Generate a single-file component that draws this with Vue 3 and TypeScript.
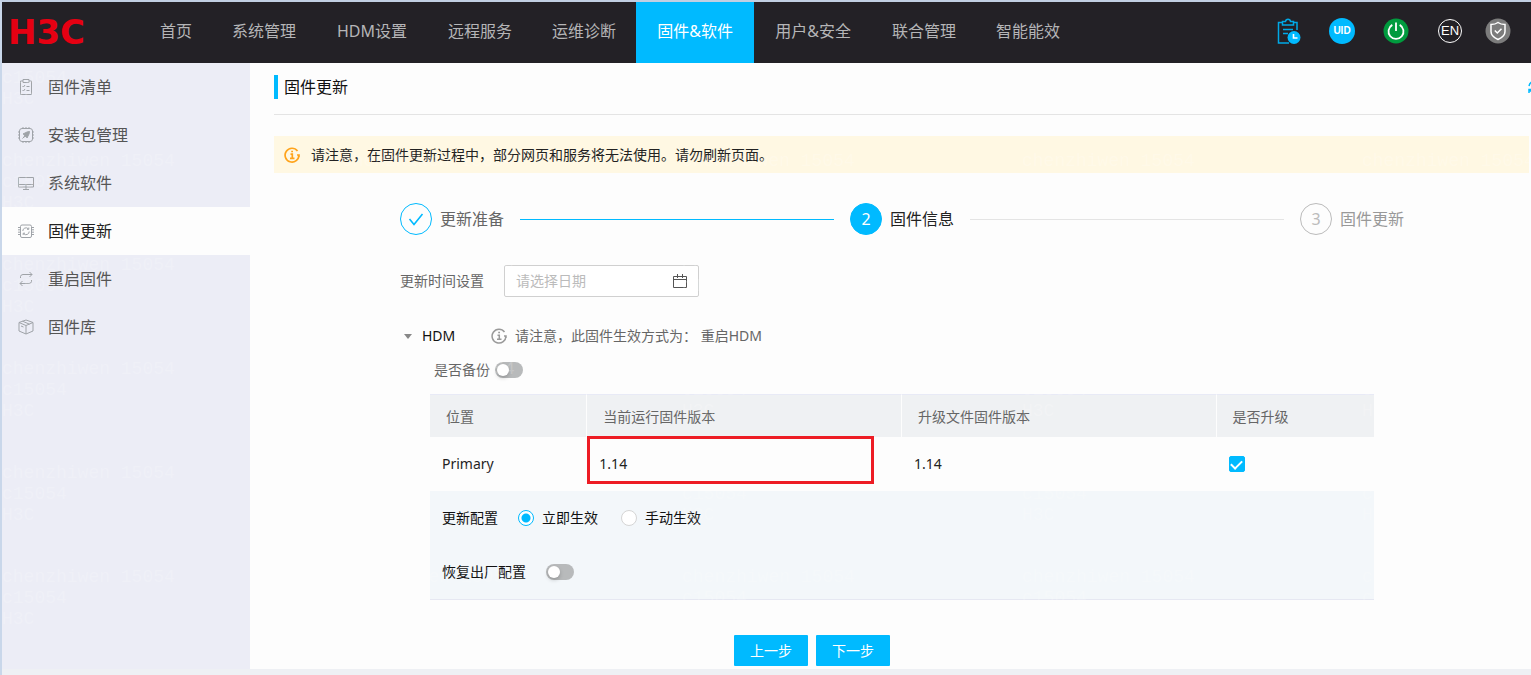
<script setup lang="ts">
import { ref } from 'vue'

interface NavItem { label: string; size?: string; active?: boolean }
interface SideItem { label: string; icon: string; active?: boolean }

const nav: NavItem[] = [
  { label: '首页' },
  { label: '系统管理' },
  { label: 'HDM设置', size: 'mid' },
  { label: '远程服务' },
  { label: '运维诊断' },
  { label: '固件&软件', size: 'wide', active: true },
  { label: '用户&安全', size: 'wide' },
  { label: '联合管理' },
  { label: '智能能效' },
]

const side: SideItem[] = [
  { label: '固件清单', icon: 'list' },
  { label: '安装包管理', icon: 'package' },
  { label: '系统软件', icon: 'monitor' },
  { label: '固件更新', icon: 'chip', active: true },
  { label: '重启固件', icon: 'loop' },
  { label: '固件库', icon: 'box' },
]

const date = ref('')
const backup = ref(false)
const upgrade = ref(true)
const effect = ref('now')
const restore = ref(false)
</script>

<template>
  <div class="page">
    <header class="top">
      <a href="#" class="logo">H3C</a>
      <nav class="nav">
        <a v-for="n in nav" :key="n.label" href="#" :class="['nav-item', n.size, { active: n.active }]">{{ n.label }}</a>
      </nav>
      <div class="tools">
        <button type="button" class="tool" aria-label="任务">
          <svg width="26" height="28" viewBox="0 0 26 28" fill="none" stroke="#00a9e6" stroke-width="1.5">
            <path d="M7 5.500H3.500V26H14M18 5.500h4V13M7.500 4.500h3c.5-3 4.500-3 5 0h3V8h-11z" />
            <path d="M8 12.500h10M8 16.500h5" />
            <circle cx="19" cy="20.500" r="6.500" fill="#00baff" stroke="none" />
            <path d="M18.500 17v4h4" stroke="#fff" stroke-width="1.600" />
          </svg>
        </button>
        <button type="button" class="tool uid">UID</button>
        <button type="button" class="tool" aria-label="电源">
          <svg width="26" height="26" viewBox="0 0 26 26" fill="none">
            <circle cx="13" cy="13" r="12.500" fill="#009b3e" />
            <path d="M9.300 6.900a7.500 7.500 0 1 0 7.400 0M13 4.500v8.500" stroke="#fff" stroke-width="1.800" />
          </svg>
        </button>
        <button type="button" class="tool en"><span>EN</span></button>
        <button type="button" class="tool" aria-label="安全">
          <svg width="26" height="26" viewBox="0 0 26 26" fill="none">
            <circle cx="13" cy="13" r="12.500" fill="#7c7c7c" />
            <path d="M13 4.500c2 1.500 4.300 2 7 2v7c0 3.500-3 6.300-7 8-4-1.700-7-4.500-7-8v-7c2.700 0 5-.5 7-2z" stroke="#fff" stroke-width="1.500" />
            <path d="M9.800 12.500l2.500 2.500 4.200-4.300" stroke="#fff" stroke-width="1.500" />
          </svg>
        </button>
      </div>
    </header>

    <div class="body">
      <aside class="side">
        <a v-for="s in side" :key="s.label" href="#" :class="['side-item', { active: s.active }]">
          <svg width="16" height="16" viewBox="0 0 16 16" fill="none" stroke="#9fa3a8" stroke-width="1">
            <template v-if="s.icon === 'list'">
              <path d="M5 2H2.500v13.500h11V2H11M5 .5h6v3H5z" />
              <path d="M4.500 7l1 1 1.500-2M4.500 11l1 1 1.500-2M8.500 7.500h3M8.500 11.500h3" />
            </template>
            <template v-else-if="s.icon === 'package'">
              <rect x="1.500" y="1.500" width="13" height="13" rx="2.500" />
              <path d="M5 0v1.500M8 0v1.500M11 0v1.500M5 14.500V16M8 14.500V16M11 14.500V16M0 5h1.500M0 8h1.500M0 11h1.500M14.500 5H16M14.500 8H16M14.500 11H16" />
              <path d="M11.500 4.500L9 5 5 7l2 .8L6 10l2.200-1L9 11l2-4z" fill="#9fa3a8" />
              <path d="M4.500 11.500l2-2" />
            </template>
            <template v-else-if="s.icon === 'monitor'">
              <path d="M.5 2.500h15v9.500H.5zM.5 9.500h15M8 9.500v4.500M5 14.500h6" />
            </template>
            <template v-else-if="s.icon === 'chip'">
              <rect x="2.500" y="2" width="11" height="12.500" rx="1.500" />
              <path d="M0 4.500h3M0 6.800h3M0 9.200h3M0 11.500h3M13 4.500h3M13 6.800h3M13 9.200h3M13 11.500h3" />
              <path d="M4.800 8a3.200 3.200 0 0 1 5.500-2.200M11.200 8.500a3.200 3.200 0 0 1-5.500 2.200M10.800 4.500v1.800H9M5.200 12v-1.800H7" />
            </template>
            <template v-else-if="s.icon === 'loop'">
              <path d="M2.500 7V5.500A2.500 2.500 0 0 1 5 3.500h9M11.500 1L14 3.500 11.500 6M13.500 9v1.500a2.500 2.500 0 0 1-2.500 2H2M4.500 10L2 12.500 4.500 15" />
            </template>
            <template v-else>
              <path d="M8 1l7 2.500v8.500l-7 3-7-3V3.500zM1 3.500l7 3 7-3M8 6.500V15M4.500 2.200l7 3M3 7l2.500 1" />
            </template>
          </svg>
          <span>{{ s.label }}</span>
        </a>
      </aside>

      <main class="main">
        <div class="title-row">
          <h1>固件更新</h1>
          <button type="button" class="refresh" aria-label="刷新">
            <svg width="14" height="14" viewBox="0 0 14 14" fill="none" stroke="#00baff" stroke-width="1.500">
              <path d="M1 6a6 6 0 0 1 11-2M13 8a6 6 0 0 1-11 2M1 13V9.500h3" />
            </svg>
          </button>
        </div>

        <div class="alert">
          <svg width="16" height="16" viewBox="0 0 16 16" fill="none" stroke="#ffa31a" stroke-width="1.700">
            <path d="M13.500 4A6.900 6.900 0 1 0 14.900 8M15 10V8h-2" />
            <path d="M6.500 7.200h1.800v4M6 11.300h4.500M7.200 4.500h1.800" />
          </svg>
          <span>请注意，在固件更新过程中，部分网页和服务将无法使用。请勿刷新页面。</span>
        </div>

        <div class="content">
          <ol class="steps">
            <li class="step done">
              <span class="dot">
                <svg width="16" height="16" viewBox="0 0 16 16" fill="none" stroke="#00baff" stroke-width="1.600"><path d="M1.500 8l4.500 5.500L14.500 3" /></svg>
              </span>
              <span class="step-title">更新准备</span>
            </li>
            <li class="step current"><span class="dot">2</span><span class="step-title">固件信息</span></li>
            <li class="step wait"><span class="dot">3</span><span class="step-title">固件更新</span></li>
          </ol>

          <div class="date-row">
            <label for="date">更新时间设置</label>
            <div class="date-box">
              <input id="date" v-model="date" type="text" placeholder="请选择日期" />
              <svg width="14" height="14" viewBox="0 0 14 14" fill="none" stroke="#555" stroke-width="1">
                <path d="M.5 2.500h13v11H.5zM.5 5.500h13M4.500 0v4M9.500 0v4" />
              </svg>
            </div>
          </div>

          <div class="group-head">
            <button type="button" class="toggle"><i class="caret"></i>HDM</button>
            <svg width="16" height="16" viewBox="0 0 16 16" fill="none" stroke="#999" stroke-width="1.500">
              <path d="M13.500 4A6.900 6.900 0 1 0 14.900 8M15 10V8h-2" />
              <path d="M6.500 7.200h1.800v4M6 11.300h4.500M7.200 4.500h1.800" />
            </svg>
            <span class="note">请注意，此固件生效方式为： 重启HDM</span>
          </div>

          <label class="backup"><span>是否备份</span><input v-model="backup" type="checkbox" role="switch" class="switch" /></label>

          <section class="panel">
            <table>
              <colgroup><col class="c1" /><col class="c2" /><col class="c2" /><col class="c1" /></colgroup>
              <thead>
                <tr><th>位置</th><th>当前运行固件版本</th><th>升级文件固件版本</th><th>是否升级</th></tr>
              </thead>
              <tbody>
                <tr>
                  <td>Primary</td>
                  <td class="marked">1.14</td>
                  <td>1.14</td>
                  <td><input v-model="upgrade" type="checkbox" class="check" aria-label="是否升级" /></td>
                </tr>
              </tbody>
            </table>
            <div class="config">
              <div class="config-row">
                <span>更新配置</span>
                <label class="radio"><input v-model="effect" type="radio" name="effect" value="now" />立即生效</label>
                <label class="radio"><input v-model="effect" type="radio" name="effect" value="manual" />手动生效</label>
              </div>
              <label class="config-row"><span>恢复出厂配置</span><input v-model="restore" type="checkbox" role="switch" class="switch" /></label>
            </div>
          </section>
        </div>

        <div class="actions">
          <button type="button">上一步</button>
          <button type="button">下一步</button>
        </div>
      </main>
    </div>

    <div class="watermark" aria-hidden="true">
      <div v-for="i in 30" :key="i" class="mark">chenzhiwen 15054<br />c15054<br />H3C</div>
    </div>
  </div>
</template>

<style>
body {
  margin: 0;
  background: #eef0f4;
}
</style>

<style scoped>
* {
  box-sizing: border-box;
}
.page {
  position: relative;
  display: flex;
  flex-direction: column;
  min-height: 100vh;
  overflow: hidden;
  padding-bottom: 6px;
  border-top: 2px solid #c1cfe2;
  border-left: 2px solid #c9d7ea;
  font: 14px/20px "Noto Sans", "Noto Sans CJK SC", sans-serif;
  color: #666;
}
button,
input {
  font: inherit;
  margin: 0;
}
button {
  border: 0;
  padding: 0;
  background: none;
  cursor: pointer;
}
a {
  text-decoration: none;
}
svg {
  flex: none;
  display: block;
}
.top {
  position: relative;
  z-index: 1;
  display: flex;
  height: 61px;
  background: #232126;
}
.logo {
  width: 138px;
  padding-left: 6px;
  font: bold 34px/60px "DejaVu Sans", sans-serif;
  color: #e60012;
}
.nav {
  display: flex;
}
.nav-item {
  padding: 0 20px;
  text-align: center;
  white-space: nowrap;
  font-size: 16px;
  line-height: 58px;
  color: #b5b5b7;
}
.mid {
  min-width: 112px;
}
.wide {
  min-width: 118px;
}
.nav-item.active {
  background: #00baff;
  color: #fff;
}
.tools {
  display: flex;
  align-items: center;
  gap: 28px;
  margin-left: auto;
  padding: 0 20px 4px 0;
}
.tool {
  display: flex;
  align-items: center;
  justify-content: center;
  width: 26px;
  height: 26px;
}
.tool:last-child {
  margin-left: -6px;
}
.uid {
  border-radius: 50%;
  background: #00baff;
  color: #fff;
  font: bold 10px/26px "Liberation Sans", sans-serif;
}
.en span {
  width: 24px;
  border: 1px solid #fff;
  border-radius: 50%;
  color: #fff;
  font: 13px/22px "Liberation Sans", sans-serif;
}
.body {
  display: flex;
  flex: 1;
}
.side {
  width: 248px;
  flex: none;
  background: #ecedf6;
}
.side-item {
  display: flex;
  align-items: center;
  gap: 14px;
  height: 48px;
  padding-left: 16px;
  font-size: 16px;
  color: #555;
}
.side-item.active {
  background: #fdfdfd;
  color: #222;
}
.main {
  flex: 1;
  min-width: 0;
  padding-left: 24px;
  background: #fdfdfd;
}
.title-row {
  display: flex;
  align-items: center;
  justify-content: space-between;
  height: 52px;
  border-bottom: 1px solid #e4e4e4;
  padding-bottom: 3px;
}
h1 {
  margin: 0;
  padding-left: 6px;
  border-left: 4px solid #00baff;
  font-size: 16px;
  line-height: 24px;
  font-weight: 400;
  color: #111;
}
.refresh {
  margin-right: -11px;
}
.alert {
  display: flex;
  align-items: center;
  gap: 11px;
  height: 37px;
  margin: 21px 2px 0 0;
  padding-left: 10px;
  background: #fff8e3;
  color: #222;
}
.content {
  padding: 30px 127px 0 126px;
}
.steps {
  display: flex;
  margin: 0;
  padding: 0;
  list-style: none;
  font-size: 16px;
  line-height: 32px;
}
.step {
  display: flex;
  align-items: center;
  gap: 8px;
  flex: 1;
  white-space: nowrap;
}
.step:last-child {
  flex: none;
}
.step:not(:last-child)::after {
  content: "";
  flex: 1;
  height: 1px;
  margin: 0 16px 0 8px;
  background: #e4e4e4;
}
.step.done::after {
  background: #00baff;
}
.dot {
  display: flex;
  align-items: center;
  justify-content: center;
  width: 32px;
  height: 32px;
  border: 1px solid #00baff;
  border-radius: 50%;
}
.current {
  color: #222;
}
.current .dot {
  background: #00baff;
  color: #fff;
}
.wait {
  color: #999;
}
.wait .dot {
  border-color: #bbb;
  color: #bbb;
}
.date-row {
  display: flex;
  align-items: center;
  gap: 20px;
  margin-top: 30px;
}
.date-box {
  display: flex;
  align-items: center;
  width: 195px;
  height: 32px;
  padding: 0 11px;
  border: 1px solid #d0d0d0;
  border-radius: 2px;
  background: #fff;
}
.date-box input {
  flex: 1;
  min-width: 0;
  padding: 0;
  border: 0;
  outline: 0;
  background: none;
}
.date-box input::placeholder {
  color: #bbb;
}
.group-head {
  display: flex;
  align-items: center;
  margin-top: 29px;
}
.toggle {
  display: flex;
  align-items: center;
  gap: 10px;
  width: 91px;
  padding-left: 4px;
  color: #111;
}
.caret {
  border: 4px solid transparent;
  border-top: 5px solid #888;
  border-bottom: 0;
}
.note {
  margin-left: 8px;
}
.backup {
  display: flex;
  align-items: center;
  gap: 5px;
  width: max-content;
  margin: 14px 0 0 34px;
}
.switch {
  appearance: none;
  width: 28px;
  height: 16px;
  padding: 2px;
  border-radius: 8px;
  background: #b8babb;
}
.switch::before {
  content: "";
  display: block;
  width: 12px;
  height: 12px;
  border-radius: 50%;
  background: #fff;
  box-shadow: 0 2px 4px rgba(0, 0, 0, 0.2);
}
.switch:checked {
  background: #00baff;
}
.switch:checked::before {
  margin-left: 12px;
}
.panel {
  margin: 14px 30px 0;
  border-bottom: 1px solid #e6e8f2;
}
table {
  width: 100%;
  table-layout: fixed;
  border-collapse: separate;
  border-spacing: 0;
}
.c1 {
  width: 16.67%;
}
.c2 {
  width: 33.33%;
}
th {
  height: 43px;
  padding: 2px 16px 0;
  border-top: 1px solid #e8eaf6;
  border-right: 1px solid #fdfdfd;
  background: #eff1f3;
  font-weight: 400;
  text-align: left;
}
th:last-child {
  border-right: 0;
}
td {
  height: 54px;
  padding: 0 12px;
  color: #222;
}
.marked {
  position: relative;
}
.marked::after {
  content: "";
  position: absolute;
  inset: -1px 28px 7px 0;
  border: 3px solid #ed1c24;
}
.check {
  appearance: none;
  display: block;
  width: 16px;
  height: 16px;
  border: 1px solid #ccc;
  border-radius: 2px;
}
.check:checked {
  border-color: #00baff;
  background: #00baff;
}
.check:checked::before {
  content: "";
  display: block;
  width: 5px;
  height: 9px;
  margin: 1px auto;
  border: solid #fff;
  border-width: 0 2px 2px 0;
  transform: rotate(45deg);
}
.config {
  display: flex;
  flex-direction: column;
  gap: 34px;
  padding: 17px 12px;
  background: #f3f7fa;
  color: #111;
}
.config-row {
  display: flex;
  align-items: center;
  gap: 20px;
}
.radio {
  display: flex;
  align-items: center;
  gap: 8px;
  padding-right: 3px;
}
.radio input {
  appearance: none;
  width: 16px;
  height: 16px;
  border: 1px solid #d5d5d5;
  border-radius: 50%;
  background: #fff;
}
.radio input:checked {
  border-color: #00baff;
  background: radial-gradient(circle, #00baff 4px, #fff 5px);
}
.actions {
  display: flex;
  justify-content: center;
  gap: 8px;
  margin: 35px 181px 3px 0;
}
.actions button {
  width: 74px;
  height: 31px;
  border-radius: 1px;
  background: #00baff;
  color: #fff;
}
.watermark {
  position: absolute;
  inset: 45px 0 0 0;
  display: grid;
  grid-template-columns: repeat(5, 340px);
  grid-auto-rows: 104px;
  overflow: hidden;
  pointer-events: none;
  color: rgba(255, 255, 255, 0.2);
  font: 18px/21px "Liberation Mono", monospace;
}
</style>
